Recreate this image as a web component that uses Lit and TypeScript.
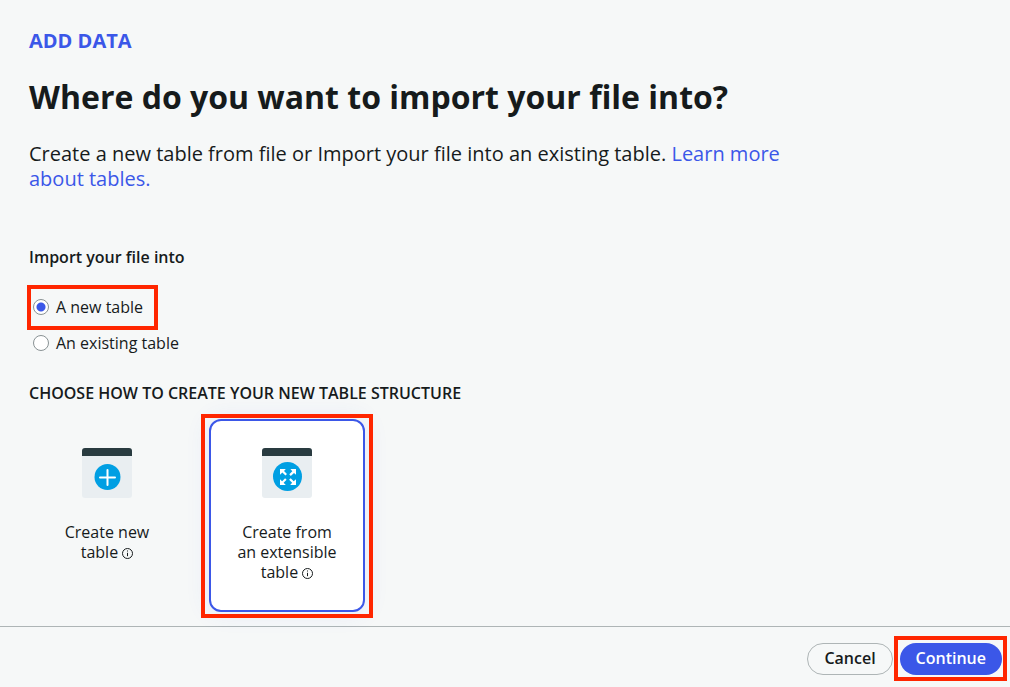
import { LitElement, html, css, svg } from "lit";
import { customElement, state } from "lit/decorators.js";
import { classMap } from "lit/directives/class-map.js";

type Target = "new" | "existing";
type Structure = "blank" | "extensible";

const plusGlyph = svg`
  <circle cx="25.500" cy="29" r="13" fill="#009fe3" />
  <path d="M25.500 22v15M18 29.500h15" stroke="#fff" stroke-width="2" stroke-linecap="round" fill="none" />
`;

const expandGlyph = svg`
  <circle cx="25.500" cy="28.500" r="14.500" fill="#009fe3" />
  <g fill="#fff">
    <path d="M18 21h5.800l-1.800 1.900 3 3-1.600 1.600-3-3-2.400 2.300z" />
    <path d="M34 21v5.800l-2-1.900-3.200 3-1.500-1.600 3-3-1.900-2.300z" />
    <path d="M18 37v-5.800l2.100 2 3-3 1.500 1.600-3 3 2.200 2.200z" />
    <path d="M34 37h-5.800l1.900-2.200-3-3 1.600-1.600 3 3 2.300-2z" />
  </g>
`;

@customElement("app-root")
export class AppRoot extends LitElement {
  static styles = css`
    :host {
      display: flex;
      flex-direction: column;
      min-height: 100vh;
      background: #f6f8f8;
      color: #161b1c;
      font-family: "Open Sans", "Noto Sans", sans-serif;
      font-size: 16px;
      line-height: 20px;
    }
    main {
      flex: 1;
      box-sizing: border-box;
      max-width: 840px;
      padding: 28px 29px 14px;
    }
    h1, h2, p, fieldset { margin: 0; padding: 0; border: 0; }
    .eyebrow {
      color: #3b57e8;
      font-size: 20px;
      font-weight: 700;
      line-height: 25px;
    }
    h1 {
      margin-top: 24px;
      font-size: 32px;
      font-weight: 700;
      line-height: 40px;
    }
    .intro {
      margin-top: 24px;
      font-size: 20px;
      line-height: 25px;
    }
    a { color: #3b57e8; text-decoration: none; }
    fieldset { min-width: 0; }
    legend { padding: 0; font-weight: 600; }
    .target { margin-top: 56px; }
    .options {
      display: flex;
      flex-direction: column;
      align-items: flex-start;
      gap: 16px;
      padding: 30px 0 0 4px;
    }
    .option {
      display: flex;
      align-items: center;
      gap: 7px;
    }
    .option input {
      appearance: none;
      box-sizing: border-box;
      width: 16px;
      height: 16px;
      margin: 0;
      border: 1px solid #899294;
      border-radius: 50%;
      background: #fff;
    }
    .option input:checked {
      background: radial-gradient(circle, #3b57e8 4px, #fff 5px);
    }
    .structure { margin-top: 30px; }
    .structure h2 {
      font-size: 16px;
      font-weight: 600;
      line-height: 20px;
    }
    .cards {
      display: flex;
      gap: 24px;
      margin-top: 16px;
    }
    .card {
      box-sizing: border-box;
      display: flex;
      flex-direction: column;
      align-items: center;
      gap: 24px;
      width: 156px;
      padding: 27px 24px 28px;
      border: 2px solid transparent;
      border-radius: 12px;
      background: none;
      color: inherit;
      font: inherit;
    }
    .card.selected {
      border-color: #3b57e8;
      background: #fff;
      box-shadow: 0 0 24px rgb(59 87 232 / 10%);
    }
    .art { display: block; width: 50px; height: 50px; }
    .info {
      width: 11px;
      height: 11px;
      vertical-align: -1px;
    }
    .marked { position: relative; }
    .marked::after {
      content: "";
      position: absolute;
      inset: -7px -5px -6px -6px;
      border: 4px solid #ff2600;
      pointer-events: none;
    }
    .option.marked::after { inset: -12px -15px -13px -6px; }
    .card.marked::after { inset: -7px -10px -8px -10px; }
    footer {
      display: flex;
      justify-content: flex-end;
      gap: 7px;
      padding: 16px 8px 12px;
      border-top: 1px solid #aeb5b6;
    }
    .btn {
      box-sizing: border-box;
      height: 32px;
      padding: 0 16px 2px;
      border: 1px solid #aeb5b6;
      border-radius: 16px;
      background: transparent;
      color: inherit;
      font: inherit;
      font-weight: 600;
    }
    .btn.primary {
      border: 0;
      background: #3b57e8;
      color: #fff;
    }
  `;

  @state() private target: Target = "new";
  @state() private structure: Structure = "extensible";

  private renderOption(value: Target, label: string) {
    return html`
      <label class=${classMap({ option: true, marked: value === "new" })}>
        <input
          type="radio"
          name="target"
          .checked=${this.target === value}
          @change=${() => (this.target = value)}
        />
        <span>${label}</span>
      </label>
    `;
  }

  private renderCard(value: Structure, label: string, glyph: unknown) {
    const selected = this.structure === value;
    return html`
      <button
        type="button"
        class=${classMap({ card: true, selected, marked: value === "extensible" })}
        aria-pressed=${selected ? "true" : "false"}
        @click=${() => (this.structure = value)}
      >
        <svg class="art" viewBox="0 0 50 50" aria-hidden="true">
          <rect width="50" height="50" rx="3" fill="#e9eef1" />
          <path d="M0 8V3a3 3 0 0 1 3-3h44a3 3 0 0 1 3 3v5z" fill="#293b40" />
          ${glyph}
        </svg>
        <span>${label} <svg class="info" viewBox="0 0 11 11" aria-hidden="true">
          <circle cx="5.500" cy="5.500" r="5" fill="none" stroke="#161b1c" />
          <path d="M5.500 2.500v1M5.500 4.800v3.400" stroke="#161b1c" />
        </svg></span>
      </button>
    `;
  }

  render() {
    return html`
      <main>
        <p class="eyebrow">ADD DATA</p>
        <h1>Where do you want to import your file into?</h1>
        <p class="intro">
          Create a new table from file or Import your file into an existing table.
          <a href="#tables">Learn more about tables.</a>
        </p>
        <fieldset class="target">
          <legend>Import your file into</legend>
          <div class="options">
            ${this.renderOption("new", "A new table")}
            ${this.renderOption("existing", "An existing table")}
          </div>
        </fieldset>
        <section class="structure">
          <h2>CHOOSE HOW TO CREATE YOUR NEW TABLE STRUCTURE</h2>
          <div class="cards">
            ${this.renderCard("blank", "Create new table", plusGlyph)}
            ${this.renderCard("extensible", "Create from an extensible table", expandGlyph)}
          </div>
        </section>
      </main>
      <footer>
        <button type="button" class="btn">Cancel</button>
        <button type="button" class="btn primary marked">Continue</button>
      </footer>
    `;
  }
}
